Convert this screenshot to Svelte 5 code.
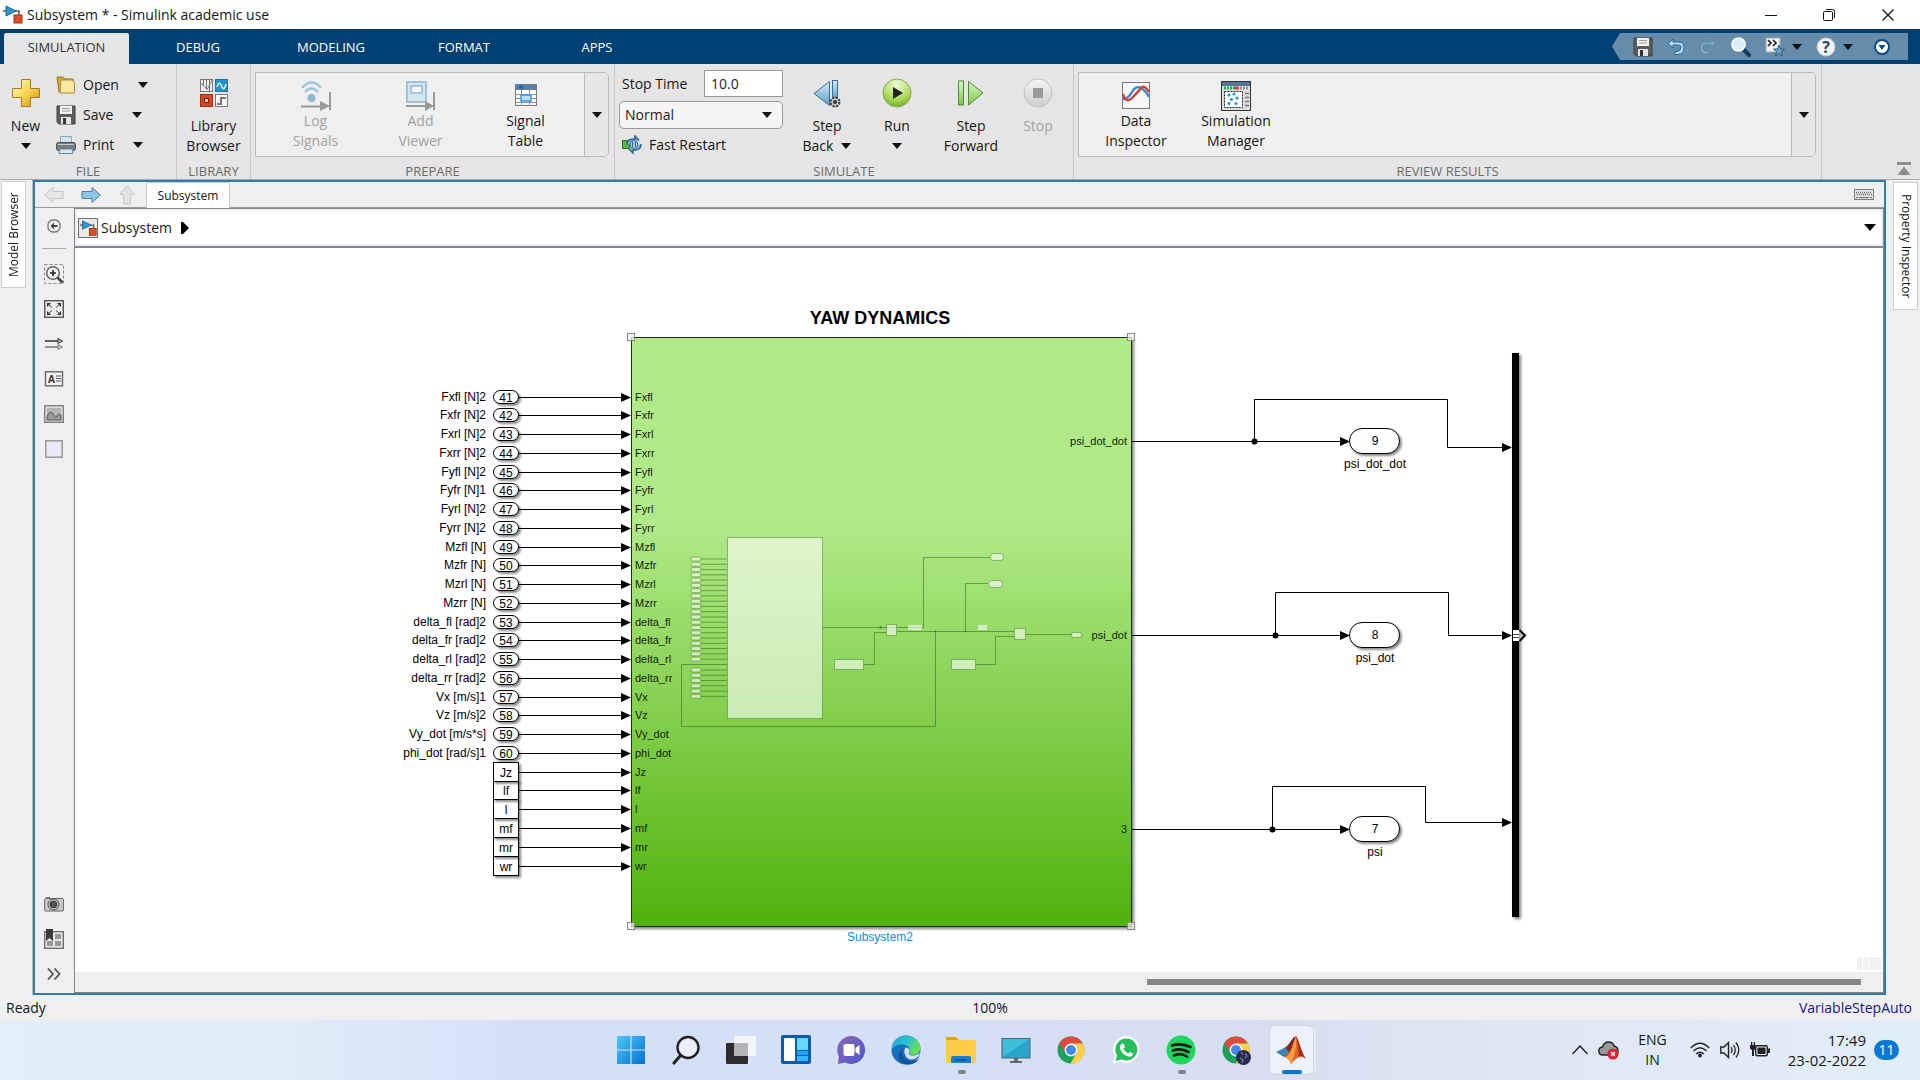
<script>
  const tabs = ['SIMULATION', 'DEBUG', 'MODELING', 'FORMAT', 'APPS'];

  const ports = [
    ['Fxfl [N]2', '41', 'Fxfl'], ['Fxfr [N]2', '42', 'Fxfr'], ['Fxrl [N]2', '43', 'Fxrl'],
    ['Fxrr [N]2', '44', 'Fxrr'], ['Fyfl [N]2', '45', 'Fyfl'], ['Fyfr [N]1', '46', 'Fyfr'],
    ['Fyrl [N]2', '47', 'Fyrl'], ['Fyrr [N]2', '48', 'Fyrr'], ['Mzfl [N]', '49', 'Mzfl'],
    ['Mzfr [N]', '50', 'Mzfr'], ['Mzrl [N]', '51', 'Mzrl'], ['Mzrr [N]', '52', 'Mzrr'],
    ['delta_fl [rad]2', '53', 'delta_fl'], ['delta_fr [rad]2', '54', 'delta_fr'],
    ['delta_rl [rad]2', '55', 'delta_rl'], ['delta_rr [rad]2', '56', 'delta_rr'],
    ['Vx [m/s]1', '57', 'Vx'], ['Vz [m/s]2', '58', 'Vz'], ['Vy_dot [m/s*s]', '59', 'Vy_dot'],
    ['phi_dot [rad/s]1', '60', 'phi_dot'],
    ['', 'Jz', 'Jz'], ['', 'lf', 'lf'], ['', 'l', 'l'], ['', 'mf', 'mf'], ['', 'mr', 'mr'], ['', 'wr', 'wr']
  ].map(([source, block, port], i) => ({ source, block, port, y: Math.floor(397 + i * 18.76) }));
  const constants = ports.filter((p) => !p.source);

  const outputs = [
    { n: '9', name: 'psi_dot_dot', port: 'psi_dot_dot', y: 441, bx: 1254, top: 399, dx: 1447, end: 447 },
    { n: '8', name: 'psi_dot', port: 'psi_dot', y: 635, bx: 1275, top: 592, dx: 1448, end: 635 },
    { n: '7', name: 'psi', port: '3', y: 829, bx: 1272, top: 786, dx: 1425, end: 822 }
  ];

  const miniPorts = [];
  for (let i = 0; i < 20; i++) miniPorts.push(559 + i * 5.27);
  for (let i = 0; i < 6; i++) miniPorts.push(670 + i * 5.27);

  const handles = [[631, 337], [1131, 337], [631, 926], [1131, 926]];

  const taskIcons = [
    ['start', 'Start'], ['search', 'Search'], ['taskview', 'Task View'], ['widgets', 'Widgets'],
    ['chat', 'Chat'], ['edge', 'Edge'], ['explorer', 'File Explorer'], ['desktop', 'Desktop'],
    ['chrome', 'Chrome'], ['whatsapp', 'WhatsApp'], ['spotify', 'Spotify'],
    ['chrome2', 'Chrome profile'], ['matlab', 'MATLAB']
  ];
  const running = ['explorer', 'spotify'];
</script>

{#snippet caret()}
  <svg class="caret" width="10" height="6" viewBox="0 0 10 6" aria-hidden="true"><path d="M0 0H10L5 6Z" fill="#111" /></svg>
{/snippet}

{#snippet floppy(size)}
  <svg width={size} height={size} viewBox="0 0 20 20" aria-hidden="true">
    <path d="M1 1H19V19H3L1 17Z" fill="#5c5c5c" stroke="#3e3e3e" />
    <rect x="4" y="1" width="12" height="8" fill="#f2f2f2" /><path d="M6 3.5H14M6 6H14" stroke="#999" />
    <rect x="5" y="12" width="10" height="7" fill="#e4e4e4" /><rect x="7" y="13" width="3" height="6" fill="#333" />
  </svg>
{/snippet}

{#snippet model()}
  <path d="M0 6H4M12 6H16V10" stroke="#555" stroke-width="1.5" fill="none" />
  <path d="M3 1L13 6L3 11Z" fill="#2f95cf" stroke="#176b9f" />
  <rect x="11" y="10" width="8" height="8" fill="#d9512b" stroke="#9c2f10" />
{/snippet}

{#snippet chromeShape()}
  <circle cx="15" cy="15" r="13.5" fill="#1da05b" />
  <path d="M3.3 8.2A13.5 13.5 0 0 1 26.7 8.2L15 9A6 6 0 0 0 9.5 18Z" fill="#dd4b3e" />
  <path d="M15 8.5H26.9A13.5 13.5 0 0 1 14.5 28.5L20.5 18Z" fill="#ffd04b" />
  <circle cx="15" cy="15" r="6.4" fill="#fff" /><circle cx="15" cy="15" r="5" fill="#4688f1" />
{/snippet}

{#snippet taskIcon(name)}
  <svg width="30" height="30" viewBox="0 0 30 30" aria-hidden="true">
    {#if name === 'start'}
      <defs><linearGradient id="win" x1="0" y1="0" x2="1" y2="1"><stop offset="0" stop-color="#4cc8fb" /><stop offset="1" stop-color="#0470cf" /></linearGradient></defs>
      <path d="M1 1H14.4V14.4H1ZM15.6 1H29V14.4H15.6ZM1 15.6H14.4V29H1ZM15.6 15.6H29V29H15.6Z" fill="url(#win)" />
    {:else if name === 'search'}
      <circle cx="17" cy="12.5" r="10.5" fill="#e8eefb" stroke="#222" stroke-width="2.4" /><path d="M9.5 20.5L3 28" stroke="#222" stroke-width="3" stroke-linecap="round" />
    {:else if name === 'taskview'}
      <rect x="0" y="8" width="22" height="21" rx="1" fill="#2c2c2c" /><rect x="8" y="1" width="22" height="20" rx="1" fill="#fafafa" opacity=".8" /><path d="M8 8H22V21H8Z" fill="#b4b4b4" />
    {:else if name === 'widgets'}
      <rect width="30" height="29" rx="2" fill="#0c5cab" /><rect x="3" y="3" width="11" height="23" rx="1" fill="#fff" /><rect x="16" y="3" width="11" height="12" rx="1" fill="#67d8ff" /><rect x="16" y="16" width="11" height="4" fill="#1ea2f3" /><rect x="16" y="21" width="11" height="5" fill="#39b4fb" />
    {:else if name === 'chat'}
      <defs><linearGradient id="chat" x1="0" y1="0" x2="1" y2="1"><stop offset="0" stop-color="#8d68b5" /><stop offset="1" stop-color="#4b56c9" /></linearGradient></defs>
      <path d="M15 1A14 14 0 1 1 9 27.6L2 29L2.8 21.5A14 14 0 0 1 15 1Z" fill="url(#chat)" /><rect x="7.5" y="9" width="11" height="12" rx="2" fill="#fff" /><path d="M19.5 13L23.5 10V20L19.5 17Z" fill="#fff" />
    {:else if name === 'edge'}
      <defs><linearGradient id="edgeTop" x1="0" y1="0" x2="1" y2=".5"><stop offset="0" stop-color="#229fd6" /><stop offset=".55" stop-color="#2bc3d2" /><stop offset="1" stop-color="#6be14c" /></linearGradient></defs>
      <circle cx="15" cy="15" r="14.5" fill="#176fc0" />
      <path d="M.6 15C1 5 7.5 .5 15 .5C24 .5 29.5 7 29.5 12.5C29.5 17 26 20 22 20C19 20 17.5 18.5 18 17C19.5 15 18.5 10 12 9.5C6 9 2 12 .6 15Z" fill="url(#edgeTop)" />
      <path d="M12.5 13C9 18 12 26.5 21 26.5C24 26.5 27 25 28.5 23.5C26 27.5 21 30 16 29.5C8 28 4 20 12.5 13Z" fill="#10529a" />
      <path d="M14.5 12.5C17 12.5 18.5 14 18 16.5C17 18.5 18.5 20.5 22 20.5C25 20.5 27 19.5 29 17.5C28.5 21 25 24.5 20.5 24.5C15 24.5 11.5 17 14.5 12.5Z" fill="#d7e0f6" />
    {:else if name === 'explorer'}
      <path d="M0 2H10L13 5V9H0Z" fill="#e5a10c" /><rect x="0" y="5" width="30" height="23" rx="1" fill="#ffcd43" /><path d="M5 28V23Q5 21 7 21H23Q25 21 25 23V28Z" fill="#1380d3" /><path d="M9 25H21" stroke="#0a4f92" stroke-width="1.5" />
    {:else if name === 'desktop'}
      <rect x="1" y="3.5" width="28" height="19.5" fill="#2aa6cd" stroke="#4f6572" /><path d="M2 4L28 4L2 22Z" fill="#46cade" opacity=".7" /><path d="M13 23H17V26H21V28H9V26H13Z" fill="#667" />
    {:else if name === 'chrome'}
      {@render chromeShape()}
    {:else if name === 'whatsapp'}
      <path d="M15 1A13.5 13.5 0 1 1 9 26.5L2 29L4 21.5A13.5 13.5 0 0 1 15 1Z" fill="#fff" /><circle cx="15.3" cy="14.5" r="11" fill="#25c05c" /><path d="M4.5 26L6 20L10.5 24.5Z" fill="#25c05c" />
      <path d="M11 8.5L13 9L14 12L12.5 13.5C13.5 16 15 17.5 17.5 18.5L19 17L22 18.5C22 21 19.5 22 17.5 21.5C13 20.5 9.5 16.5 9 12.5C9 10.5 10 9 11 8.5Z" fill="#fff" />
    {:else if name === 'spotify'}
      <circle cx="15" cy="15" r="14.5" fill="#1ed760" /><path d="M6 10.5Q15 7.5 24.5 12M7 15.5Q15 12.5 22.5 17M8 20.5Q15 17.5 21 21.5" stroke="#10180f" stroke-width="2.7" fill="none" stroke-linecap="round" />
    {:else if name === 'chrome2'}
      {@render chromeShape()}
      <circle cx="22.5" cy="22.5" r="7.5" fill="#262b4d" /><path d="M20 17L22 20M24 18L26 21L24 23M19 23L22 25L21 28" stroke="#7678a0" stroke-width="1.3" fill="none" />
    {:else}
      <path d="M0 17L9 12.5L14 16L8 22Z" fill="#3e83b8" /><path d="M9 12.5C13 11 16 2 20 1L13 21L8 22L13 17Z" fill="#7c2b22" /><path d="M20 1C23 5 25 17 30 24C25 20 22 21 15 29C14 25 11 22 8 22C15 19 18 7 20 1Z" fill="#e2622a" /><path d="M20 1C21 10 19 20 15 29C14 25 12 23 10 22C16 18 18 8 20 1Z" fill="#f5a038" /><path d="M20 1C22 9 23 15 22.5 22C25 20 27 21 30 24C25 17 23 5 20 1Z" fill="#a92d1c" />
    {/if}
  </svg>
{/snippet}

{#snippet minimap()}
  <g class="mini">
    <rect x="727.5" y="537.5" width="95" height="181" />
    {#each miniPorts as y}
      <path d="M701 {y}H727" /><rect x="691" y={y - 2} width="10" height="4" rx="2" />
    {/each}
    <path d="M727 664.5H681.5V726.5H935.5V631.5" />
    <path d="M823 627.5H923.5V557.5H990M897 631.5H1014M965.5 631.5V583.5H988M1026 634.5H1071M864 664.5H874.5V632.5H886M976 664.5H995.5V636.5H1014" />
    <rect x="886.5" y="624.5" width="10" height="11" /><rect x="1014.5" y="628.5" width="11" height="11" />
    <rect x="834.5" y="659.5" width="29" height="10" /><rect x="951.5" y="659.5" width="24" height="10" />
    <rect x="990.5" y="553.5" width="13" height="7" rx="3" /><rect x="988.5" y="580.5" width="14" height="7" rx="3" />
    <rect x="1071.5" y="632.5" width="10" height="5" rx="2" />
    <rect class="plain" x="908" y="625" width="14" height="5" /><rect class="plain" x="978" y="625" width="9" height="5" />
    <path d="M880 626.5L882 627.5L880 628.5ZM935 631H936V632H935ZM965 631H966V632H965Z" />
  </g>
{/snippet}

<div class="app">
  <header class="titlebar">
    <svg width="20" height="20" viewBox="0 0 20 20" aria-hidden="true">{@render model()}</svg>
    <h1>Subsystem * - Simulink academic use</h1>
    <div class="window-buttons">
      <button aria-label="Minimize"><svg width="12" height="12" viewBox="0 0 12 12"><path d="M0 6.5H12" stroke="#111" /></svg></button>
      <button aria-label="Restore"><svg width="12" height="12" viewBox="0 0 12 12"><path d="M.5 3.5Q.5 2.5 1.5 2.5H8.5Q9.5 2.5 9.5 3.5V10.5Q9.5 11.5 8.5 11.5H1.5Q.5 11.5 .5 10.5ZM3 .5H9.5Q11.5 .5 11.5 2.5V9" stroke="#111" fill="none" /></svg></button>
      <button aria-label="Close"><svg width="12" height="12" viewBox="0 0 12 12"><path d="M.5 .5L11.5 11.5M11.5 .5L.5 11.5" stroke="#111" stroke-width="1.2" /></svg></button>
    </div>
  </header>

  <nav class="tabs" aria-label="Toolstrip">
    {#each tabs as tab, i}
      <button class="tab" class:active={i === 0}>{tab}</button>
    {/each}
    <div class="quick">
      <button aria-label="Save">{@render floppy(20)}</button>
      <button aria-label="Undo"><svg width="18" height="18" viewBox="0 0 18 18"><path d="M6 1L1 5.5L6 10V7H12Q14 7 14 9.5Q14 13 10 13.5H8V16.5H11Q17 16 17 9.5Q17 4 12 4H6Z" fill="#b4dcf5" stroke="#2c638d" /></svg></button>
      <button aria-label="Redo"><svg width="18" height="18" viewBox="0 0 18 18"><path d="M12 1L17 5.5L12 10V7H6Q4 7 4 9.5Q4 13 8 13.5H10V16.5H7Q1 16 1 9.5Q1 4 6 4H12Z" fill="#7fa5c1" stroke="#5983a5" /></svg></button>
      <button aria-label="Search"><svg width="20" height="20" viewBox="0 0 20 20"><path d="M11 11L18 18" stroke="#173a5c" stroke-width="4" stroke-linecap="round" /><circle cx="7.5" cy="7.5" r="6.5" fill="#d8effb" stroke="#fff" stroke-width="1.6" /></svg></button>
      <button class="wide" aria-label="Favorites"><svg width="20" height="20" viewBox="0 0 20 20"><rect x="1" y="1" width="14" height="14" fill="#f1f1f1" stroke="#9aa" /><path d="M3 3L6 6L3 9M8 3L11 6L8 9" stroke="#222" stroke-width="1.7" fill="none" /><path d="M14 8L15.5 12H19.5L16.5 14.5L17.5 19L14 16.5L10.5 19L11.5 14.5L8.5 12H12.5Z" fill="#6d9fc8" stroke="#315d87" /></svg>{@render caret()}</button>
      <button class="wide" aria-label="Help"><svg width="20" height="20" viewBox="0 0 20 20"><circle cx="10" cy="10" r="9" fill="#f1f5f8" stroke="#c2ccd5" /><text x="10" y="16" text-anchor="middle" font-size="16" font-weight="700" fill="#345">?</text></svg>{@render caret()}</button>
      <button aria-label="Toolstrip options"><svg width="16" height="16" viewBox="0 0 16 16"><circle cx="8" cy="8" r="7" fill="#fff" stroke="#0b4d80" stroke-width="2" /><path d="M4.5 6H11.5L8 11Z" fill="#0b4d80" /></svg></button>
    </div>
  </nav>

  <div class="ribbon">
    <section class="group file">
      <div class="body">
        <button class="big new">
          <svg width="30" height="30" viewBox="0 0 30 30" aria-hidden="true"><defs><linearGradient id="gold" x1="0" y1="0" x2="1" y2="1"><stop offset="0" stop-color="#fffbe0" /><stop offset=".5" stop-color="#f8d64b" /><stop offset="1" stop-color="#c98f1a" /></linearGradient></defs><path d="M10.5 1.5H19.5V10.5H28.5V19.5H19.5V28.5H10.5V19.5H1.5V10.5H10.5Z" fill="url(#gold)" stroke="#a67c23" /></svg>
          <span>New</span><span>{@render caret()}</span>
        </button>
        <div class="rows">
          <button class="row"><svg width="20" height="20" viewBox="0 0 20 20" aria-hidden="true"><path d="M1 2H7L9 4H17V17H3Z" fill="#d9a835" stroke="#9b7420" /><path d="M5 5H16L18.5 7V18H4Z" fill="#fae9a2" stroke="#b08a34" /></svg>Open{@render caret()}</button>
          <button class="row">{@render floppy(20)}Save{@render caret()}</button>
          <button class="row"><svg width="20" height="20" viewBox="0 0 20 20" aria-hidden="true"><path d="M4.5 8V1.5H15.5V8" fill="#cfe4f5" stroke="#8aa" /><rect x=".5" y="7.5" width="19" height="8" rx="2" fill="#777c80" stroke="#4d5052" /><path d="M2 9.5H18" stroke="#c9cdd0" /><path d="M4 14H16L17 18.5H3Z" fill="#d4e8f7" stroke="#6f8391" /></svg>Print{@render caret()}</button>
        </div>
      </div>
      <h2>FILE</h2>
    </section>

    <section class="group library">
      <div class="body center">
        <button class="big">
          <svg width="30" height="30" viewBox="0 0 30 30" aria-hidden="true"><rect x="1.5" y="1.5" width="12" height="12" fill="#eee" stroke="#777" /><path d="M4.5 2V8M7.500 2V11L2 5M10.500 2V13M13 2L8 12" stroke="#777" fill="none" /><rect x="16.5" y="1.5" width="12" height="12" fill="#2391cb" stroke="#1474a8" /><path d="M18 9Q20 2 22.5 8T27 6" stroke="#d3f0ff" stroke-width="1.5" fill="none" /><rect x="1.5" y="16.5" width="12" height="12" fill="#d34a22" stroke="#9b2f10" /><rect x="5.5" y="20.5" width="4" height="4" fill="#f4c2b1" stroke="#75200a" /><rect x="16.5" y="16.5" width="12" height="12" fill="#f5f5f5" stroke="#777" /><path d="M18 26H22V20H27" stroke="#777" stroke-width="2" fill="none" /></svg>
          <span>Library</span><span>Browser</span>
        </button>
      </div>
      <h2>LIBRARY</h2>
    </section>

    <section class="group prepare">
      <div class="body">
        <div class="gallery">
          <button class="item" disabled>
            <svg width="30" height="28" viewBox="0 0 30 28" aria-hidden="true"><path d="M0 24.5H20" stroke="#9a9a9a" stroke-width="2" /><path d="M19 19L29 24L19 29ZM28 10H30V28H28Z" fill="#999" /><g stroke="#9cc4de" fill="none" stroke-width="2.4"><path d="M1 6Q10.5 -5 20 6M4 10Q10.5 3 17 10" /></g><circle cx="10.5" cy="16" r="4" fill="#8fb8d4" /></svg>
            <span>Log</span><span>Signals</span>
          </button>
          <button class="item" disabled>
            <svg width="30" height="28" viewBox="0 0 30 28" aria-hidden="true"><rect x="1" y="0" width="19" height="20" fill="#d5e5f0" stroke="#a5c3d8" stroke-width="2" /><rect x="5" y="4" width="11" height="7" fill="#f4f8fb" stroke="#93b7d1" stroke-width="1.5" /><path d="M0 24H20" stroke="#9a9a9a" stroke-width="2" /><path d="M19 19L28 24L19 29ZM27 10H29V28H27Z" fill="#999" /></svg>
            <span>Add</span><span>Viewer</span>
          </button>
          <button class="item">
            <svg width="30" height="28" viewBox="0 0 30 28" aria-hidden="true"><rect x="4.5" y="2.5" width="21" height="21" fill="#fff" stroke="#777" /><rect x="4" y="2" width="22" height="6" fill="#5f7f9f" /><rect x="8" y="3.5" width="4" height="3" fill="#1c5fc0" /><path d="M5 12.5H25M5 16.5H25M5 20.5H25M10.5 8V24M18.5 8V24" stroke="#8a929a" /><rect x="10" y="13" width="10" height="6" fill="#b9defa" stroke="#3c95e0" stroke-width="1.5" /></svg>
            <span>Signal</span><span>Table</span>
          </button>
          <button class="more" aria-label="More prepare tools">{@render caret()}</button>
        </div>
      </div>
      <h2>PREPARE</h2>
    </section>

    <section class="group simulate">
      <div class="body">
        <div class="fields">
          <div class="stop-time"><label for="stop-time">Stop Time</label><input id="stop-time" value="10.0" /></div>
          <div class="mode">
            <select aria-label="Simulation mode"><option>Normal</option></select>
            {@render caret()}
          </div>
          <button class="row fast"><svg width="20" height="20" viewBox="0 0 20 20" aria-hidden="true"><rect x=".5" y="5.5" width="7" height="8" fill="#59b347" stroke="#34762a" /><path d="M5 9.5Q5 4 11 4H13V1L17 5.5M19 9Q19 15 13 15H11V18L6.5 13.5" fill="#88b9d9" stroke="#2d658c" stroke-width="1.5" /><circle cx="12" cy="9.5" r="4" fill="#a5cbe3" stroke="#3b7098" /><path d="M10.5 7V12M13.5 7V12" stroke="#2d658c" /></svg>Fast Restart</button>
        </div>
        <button class="big">
          <svg width="30" height="30" viewBox="0 0 30 30" aria-hidden="true"><defs><linearGradient id="sky" x1="0" y1="0" x2="0" y2="1"><stop offset="0" stop-color="#d5ebf8" /><stop offset="1" stop-color="#5b9dc8" /></linearGradient></defs><path d="M17.5 3.5V27.5L2 15.5Z" fill="url(#sky)" stroke="#3a6e94" /><rect x="20.5" y="2.5" width="5" height="20" fill="url(#sky)" stroke="#3a6e94" /><circle cx="23" cy="24" r="4.5" fill="#ccc" stroke="#444" stroke-width="2" stroke-dasharray="2.5 1" /><circle cx="23" cy="24" r="2" fill="#333" /></svg>
          <span>Step</span><span>Back{@render caret()}</span>
        </button>
        <button class="big">
          <svg width="30" height="30" viewBox="0 0 30 30" aria-hidden="true"><defs><radialGradient id="run" cx=".5" cy=".2" r=".9"><stop offset="0" stop-color="#f0fad7" /><stop offset=".6" stop-color="#acd957" /><stop offset="1" stop-color="#579f1f" /></radialGradient></defs><circle cx="15" cy="15" r="14" fill="url(#run)" stroke="#8aa964" /><path d="M11 9L21 15L11 21Z" fill="#222" /></svg>
          <span>Run</span><span>{@render caret()}</span>
        </button>
        <button class="big fwd">
          <svg width="30" height="30" viewBox="0 0 30 30" aria-hidden="true"><defs><linearGradient id="leaf" x1="0" y1="0" x2="0" y2="1"><stop offset="0" stop-color="#dcf5c3" /><stop offset="1" stop-color="#7cc64d" /></linearGradient></defs><rect x="2.5" y="3" width="5" height="24" fill="url(#leaf)" stroke="#4c8a2c" /><path d="M12.5 3.5V27L27 15Z" fill="url(#leaf)" stroke="#4c8a2c" /></svg>
          <span>Step</span><span>Forward</span>
        </button>
        <button class="big stop" disabled>
          <svg width="30" height="30" viewBox="0 0 30 30" aria-hidden="true"><defs><linearGradient id="pale" x1="0" y1="0" x2="0" y2="1"><stop offset="0" stop-color="#f4f4f4" /><stop offset="1" stop-color="#cfcfcf" /></linearGradient></defs><circle cx="15" cy="15" r="14" fill="url(#pale)" stroke="#c2c2c2" /><rect x="10" y="10" width="10" height="10" fill="#9a9a9a" /></svg>
          <span>Stop</span>
        </button>
      </div>
      <h2>SIMULATE</h2>
    </section>

    <section class="group review">
      <div class="body">
        <div class="gallery">
          <button class="item">
            <svg width="30" height="28" viewBox="0 0 30 28" aria-hidden="true"><rect x="1.5" y=".5" width="27" height="26" fill="#f6f6f6" stroke="#777" /><path d="M2 17Q7 17 11 10T20 6T28 15" stroke="#3b87c4" stroke-width="2.4" fill="none" /><path d="M2 12Q5 22 11 16T20 6T28 10" stroke="#c8413a" stroke-width="2.4" fill="none" /></svg>
            <span>Data</span><span>Inspector</span>
          </button>
          <button class="item">
            <svg width="30" height="30" viewBox="0 0 30 30" aria-hidden="true"><rect x=".5" y=".5" width="29" height="29" fill="#ddd" stroke="#333" /><rect x="1" y="1" width="28" height="4" fill="#54749a" /><path d="M3 7H14" stroke="#18b34b" stroke-width="3" stroke-dasharray="2 1" /><path d="M14 7H18" stroke="#e3392c" stroke-width="3" /><path d="M19 7H28" stroke="#999" stroke-width="3" stroke-dasharray="2 1" /><rect x="3.5" y="10.5" width="18" height="16" fill="#fff" stroke="#222" stroke-dasharray="2 1" /><g fill="#2591da"><circle cx="8" cy="14" r="1.6" /><circle cx="13" cy="13" r="1.6" /><circle cx="10.5" cy="18.5" r="1.6" /><circle cx="16" cy="17" r="1.6" /><circle cx="8" cy="22.5" r="1.6" /><circle cx="15" cy="22.5" r="1.6" /></g><path d="M24 12.5H28M24 16.5H28M24 20.5H28M24 24.5H28" stroke="#777" stroke-width="1.5" /></svg>
            <span>Simulation</span><span>Manager</span>
          </button>
          <button class="more" aria-label="More review tools">{@render caret()}</button>
        </div>
      </div>
      <h2>REVIEW RESULTS</h2>
    </section>
    <div class="collapse"><button aria-label="Minimize toolstrip"><svg width="14" height="14" viewBox="0 0 14 14"><path d="M0 0H14V3H0ZM7 4.5L13.5 13H.5Z" fill="#8f8f8f" /></svg></button></div>
  </div>

  <main>
    <aside class="rail"><button class="side left">Model Browser</button></aside>

    <div class="editor">
      <div class="navbar">
        <button aria-label="Back"><svg width="20" height="18" viewBox="0 0 20 18"><path d="M.7 9L9 1.5V5.5H19V12.5H9V16.5Z" fill="#e6e6e6" stroke="#c4c4c4" /></svg></button>
        <button aria-label="Forward"><svg width="20" height="18" viewBox="0 0 20 18"><path d="M19.3 9L11 1.5V5.5H1V12.5H11V16.5Z" fill="#8fc3e6" stroke="#4681a8" /></svg></button>
        <button aria-label="Up"><svg width="18" height="20" viewBox="0 0 18 20"><path d="M9 .7L1.5 9.5H5.5V19H12.5V9.5H16.5Z" fill="#e2e2e2" stroke="#c8c8c8" /></svg></button>
        <button class="doc">Subsystem</button>
        <button class="keys" aria-label="Keyboard"><svg width="20" height="11" viewBox="0 0 20 11"><rect x=".5" y=".5" width="19" height="10" fill="#e3e3e3" stroke="#7c7c7c" /><path d="M2 3.5H18M3 5.500H18" stroke="#6c6c6c" stroke-width="1.5" stroke-dasharray="1 1" /><path d="M2 8.5H4M5 8.5H15M16 8.5H18" stroke="#6c6c6c" /></svg></button>
      </div>

      <div class="work">
        <div class="palette">
          <button aria-label="Hide browser"><svg width="14" height="14" viewBox="0 0 14 14"><rect x="1" y="1" width="12" height="12" rx="5" fill="#eee" stroke="#777" stroke-width="1.3" /><path d="M7 3.5L3.5 7L7 10.5V8H10.5V6H7Z" fill="#444" /></svg></button>
          <hr />
          <button aria-label="Zoom"><svg width="20" height="20" viewBox="0 0 20 20"><rect x=".5" y=".5" width="19" height="19" fill="none" stroke="#888" stroke-dasharray="3 2" /><circle cx="9" cy="9" r="6.3" fill="#f4f4f4" stroke="#666" stroke-width="1.5" /><path d="M9 6V12M6 9H12" stroke="#222" stroke-width="1.6" /><path d="M13.5 13.5L18.5 18.5" stroke="#444" stroke-width="2.6" /></svg></button>
          <button aria-label="Fit to view"><svg width="20" height="18" viewBox="0 0 20 18"><rect x=".7" y=".7" width="18.6" height="16.6" fill="#eaeaea" stroke="#555" stroke-width="1.4" /><path d="M3 3H7L3 7ZM17 3H13L17 7ZM3 15H7L3 11ZM17 15H13L17 11Z" fill="#333" /><path d="M4 4L8 7.5M16 4L12 7.5M4 14L8 10.5M16 14L12 10.5" stroke="#444" /></svg></button>
          <button aria-label="Sample times"><svg width="20" height="14" viewBox="0 0 20 14"><path d="M1 4H15" stroke="#333" stroke-width="1.5" /><path d="M1 10H15" stroke="#777" stroke-width="1.5" /><path d="M14 1.5L18.5 4L14 6.5Z" fill="#ccc" stroke="#333" /><path d="M14 7.5L18.5 10L14 12.5Z" fill="#ddd" stroke="#777" /></svg></button>
          <button aria-label="Annotation"><svg width="20" height="16" viewBox="0 0 20 16"><rect x="1.5" y=".8" width="17" height="14" fill="#f2f2f2" stroke="#666" stroke-width="1.4" /><text x="7.5" y="11.5" text-anchor="middle" font-size="10" font-weight="700" fill="#333">A</text><path d="M12 5H17M12 7.5H17M12 10H17" stroke="#555" /></svg></button>
          <button aria-label="Image"><svg width="20" height="18" viewBox="0 0 20 18"><rect x=".7" y=".7" width="18.6" height="16.6" fill="#ddd" stroke="#808080" stroke-width="1.4" /><rect x="3" y="3" width="14" height="12" fill="#b4b4b4" /><path d="M3 12Q6 4 9 9T13 11T17 10V15H3Z" fill="#999" stroke="#555" /></svg></button>
          <button aria-label="Area"><svg width="18" height="18" viewBox="0 0 18 18"><rect x=".8" y=".8" width="16.4" height="16.4" fill="#e9e9f8" stroke="#999" stroke-width="1.5" /></svg></button>
          <div class="spacer"></div>
          <button aria-label="Screenshot"><svg width="20" height="16" viewBox="0 0 20 16"><path d="M2 1H6V3H2Z" fill="#777" /><rect x=".6" y="2.5" width="18.8" height="12.5" rx="1" fill="#c9c9c9" stroke="#666" /><circle cx="9.5" cy="8.5" r="5.5" fill="#bbb" stroke="#555" /><circle cx="9.5" cy="8.5" r="3.3" fill="#555" stroke="#333" /></svg></button>
          <button aria-label="Bookmarks"><svg width="20" height="20" viewBox="0 0 20 20"><rect x=".7" y="2.7" width="18.6" height="16.6" fill="#e8e8e8" stroke="#707070" stroke-width="1.4" /><path d="M11 5H17V10H11ZM11 12H17V17H11ZM3 12H9V17H3Z" fill="#999" /><path d="M2 0H9V12L5.5 9L2 12Z" fill="#3c3c3c" /></svg></button>
          <button aria-label="More"><svg width="14" height="12" viewBox="0 0 14 12"><path d="M1 .5L6 6L1 11.5M7.5 .5L12.5 6L7.5 11.5" stroke="#555" stroke-width="1.8" fill="none" /></svg></button>
        </div>

        <div class="view">
          <div class="crumbs">
            <svg width="20" height="20" viewBox="0 0 20 20" aria-hidden="true"><rect x=".5" y=".5" width="19" height="19" fill="#e9e9e9" stroke="#707070" /><g transform="translate(2 2) scale(.85)">{@render model()}</g></svg>
            <button>Subsystem</button>
            <svg class="arrow" width="8" height="12" viewBox="0 0 8 12" aria-hidden="true"><path d="M0 0H2L8 6L2 12H0Z" fill="#000" /></svg>
            <button class="drop" aria-label="Path history"><svg width="12" height="7" viewBox="0 0 12 7"><path d="M0 0H12L6 7Z" fill="#000" /></svg></button>
          </div>

          <div class="canvas">
            <svg class="diagram" aria-label="Yaw dynamics block diagram">
              <defs>
                <linearGradient id="green" x1="0" y1="0" x2="0" y2="1"><stop offset="0" stop-color="#b2ea8a" /><stop offset=".32" stop-color="#b0e987" /><stop offset="1" stop-color="#50b20c" /></linearGradient>
                <filter id="shade" x="-20%" y="-20%" width="150%" height="160%"><feDropShadow dx="2" dy="2" stdDeviation="1.5" flood-opacity=".5" /></filter>
                <filter id="shadeBar" filterUnits="userSpaceOnUse" x="1500" y="340" width="40" height="600"><feDropShadow dx="2" dy="2" stdDeviation="1.5" flood-opacity=".5" /></filter>
              </defs>
              <g transform="translate(-75 -248)">
                <text class="heading" x="880" y="324" text-anchor="middle">YAW DYNAMICS</text>
                <rect x="631.5" y="337.5" width="500" height="589" fill="url(#green)" stroke="#1c2a12" filter="url(#shade)" />
                {@render minimap()}
                {#each handles as [x, y]}
                  <rect x={x - 3.5} y={y - 3.5} width="7" height="7" fill="#f4f4f4" fill-opacity=".7" stroke="#888" />
                {/each}
                <text class="link" x="880" y="941" text-anchor="middle">Subsystem2</text>

                {#each [...constants].reverse() as p}
                  <rect x="493.5" y={p.y - 9.5} width="25" height="19" class="block" />
                {/each}
                {#each ports as p}
                  {#if p.source}
                    <text x="486" y={p.y + 4} text-anchor="end">{p.source}</text>
                    <rect x="493.5" y={p.y - 6.5} width="25" height="13" rx="6.5" class="block" />
                  {/if}
                  <text x="506" y={p.y + 5} text-anchor="middle">{p.block}</text>
                  <path class="wire" d="M519 {p.y + 0.5}H622" />
                  <path d="M621 {p.y - 4}L631 {p.y + 0.5}L621 {p.y + 5}Z" />
                  <text class="port" x="635" y={p.y + 4}>{p.port}</text>
                {/each}

                <rect x="1512" y="353" width="7" height="564" filter="url(#shadeBar)" />
                {#each outputs as o}
                  <text class="port" x="1127" y={o.y + 4} text-anchor="end">{o.port}</text>
                  <path class="wire" d="M1132 {o.y + 0.5}H1342M{o.bx + 0.5} {o.y}V{o.top + 0.5}H{o.dx + 0.5}V{o.end + 0.5}H1504" />
                  <circle cx={o.bx + 0.5} cy={o.y + 0.5} r="3" />
                  <path d="M1340 {o.y - 4}L1350 {o.y + 0.5}L1340 {o.y + 5}ZM1502 {o.end - 4}L1512 {o.end + 0.5}L1502 {o.end + 5}Z" />
                  <rect x="1349.5" y={o.y - 12.5} width="50" height="25" rx="12.5" class="block" />
                  <text x="1375" y={o.y + 4} text-anchor="middle">{o.n}</text>
                  <text x="1375" y={o.y + 27} text-anchor="middle">{o.name}</text>
                {/each}
                <path d="M1519.5 630L1525 635.5L1519.5 641" fill="#bbb" stroke="#000" stroke-width="2" />
                <rect x="1513" y="630" width="6" height="11" fill="#fff" />
                <path d="M1513 634.5H1519M1513 637.5H1519" stroke="#444" />
              </g>
            </svg>
            <div class="grip"><i></i><i></i><i class="last"></i></div>
          </div>
          <div class="scroll"><span></span></div>
        </div>
      </div>
    </div>

    <aside class="rail right"><button class="side">Property Inspector</button></aside>
  </main>

  <footer class="status"><span>Ready</span><span class="mid">100%</span><span class="solver">VariableStepAuto</span></footer>

  <div class="taskbar">
    <div class="apps">
      {#each taskIcons as [name, label]}
        <button class="task" class:current={name === 'matlab'} class:running={running.includes(name)} aria-label={label}>{@render taskIcon(name)}</button>
      {/each}
    </div>
    <div class="tray">
      <button aria-label="Hidden icons"><svg width="16" height="10" viewBox="0 0 16 10"><path d="M.5 9L8 1L15.5 9" stroke="#222" stroke-width="1.5" fill="none" /></svg></button>
      <button aria-label="OneDrive"><svg width="21" height="19" viewBox="0 0 21 19"><path d="M5 14Q.8 14 .8 10Q.8 6.5 4.5 6Q6 1 10.5 1Q15 1 16 5Q20 6 20 10T16 14Z" fill="#999" stroke="#222" stroke-width="1.4" /><circle cx="15" cy="13" r="5.6" fill="#d92232" /><path d="M13 11L17 15M17 11L13 15" stroke="#fff" stroke-width="1.4" /></svg></button>
      <button class="lang"><span>ENG</span><span>IN</span></button>
      <button aria-label="Wi-Fi"><svg width="20" height="16" viewBox="0 0 20 16"><path d="M.8 6Q10 -3.5 19.2 6M3.5 9Q10 2.5 16.5 9M6.2 12Q10 8.3 13.8 12" stroke="#222" stroke-width="1.4" fill="none" /><circle cx="10" cy="13.5" r="1.9" fill="#222" /></svg></button>
      <button aria-label="Volume"><svg width="20" height="18" viewBox="0 0 20 18"><path d="M.8 6H4L8.5 1.5V16.5L4 12H.8Z" fill="none" stroke="#222" stroke-width="1.4" /><path d="M11 6Q13 9 11 12M13.5 4Q17 9 13.5 14M16 1.5Q21.5 9 16 16.5" stroke="#222" stroke-width="1.3" fill="none" /></svg></button>
      <button aria-label="Battery"><svg width="20" height="16" viewBox="0 0 20 16"><path d="M0 3H6V6Q6 7.5 4 8V14H2V8Q0 7.5 0 6ZM1 0H2.3V3H1ZM3.7 0H5V3H3.7Z" fill="#222" /><rect x="5.7" y="3.7" width="11.6" height="10" rx="1.5" fill="none" stroke="#222" stroke-width="1.4" /><rect x="7.5" y="5.5" width="8" height="6.5" fill="#222" /><path d="M18 6.5H20V11H18Z" fill="#222" /></svg></button>
      <button class="clock"><span>17:49</span><span>23-02-2022</span></button>
      <button class="badge">11</button>
    </div>
  </div>
</div>

<style>
  :global(body) { margin: 0; }
  .app {
    display: flex; flex-direction: column; min-height: 100vh; background: #efefef;
    font-family: "Open Sans", "Noto Sans", sans-serif; font-size: 14px; line-height: 20px; color: #161616;
  }
  button { font: inherit; color: inherit; background: none; border: 0; padding: 0; margin: 0; white-space: nowrap; }
  button:disabled { color: #a2a2a2; }
  svg { display: block; flex: none; }
  h1, h2 { margin: 0; font-weight: 400; }

  .titlebar { display: flex; align-items: center; height: 29px; background: #fff; padding-left: 3px; }
  .titlebar h1 { flex: 1; font-size: 14px; padding-left: 4px; }
  .window-buttons { display: flex; padding-right: 2px; }
  .window-buttons button { width: 58px; display: grid; place-items: center; }
  .window-buttons button:last-child { width: 60px; }

  .tabs { display: flex; gap: 3px; height: 35px; background: #004073; padding-left: 4px; align-items: flex-end; }
  .tab { width: 130px; height: 31px; color: #fff; font-size: 13px; padding-bottom: 3px; }
  .tab.active { width: 125px; margin-right: 1px; background: #e6e6e6; color: #333; border-radius: 2px 2px 0 0; }
  .quick {
    display: flex; align-items: center; gap: 14px; height: 27px; margin: 0 12px 4px auto; padding: 0 18px 0 21px;
    background: #668cab; clip-path: polygon(8px 0, 100% 0, 100% 100%, 8px 100%, 0 50%);
  }
  .quick .wide { display: flex; align-items: center; gap: 7px; }
  .quick button:last-child { margin-left: 7px; }

  .ribbon { display: flex; height: 115px; background: #e5e5e5; border-bottom: 1px solid #a9a9a9; }
  .group { display: flex; flex-direction: column; border-right: 1px solid #c6c6c6; padding-top: 6px; }
  .group h2 { text-align: center; font-size: 13px; line-height: 16px; color: #6b6b6b; }
  .body { display: flex; height: 93px; }
  .center { justify-content: center; }
  .file { width: 176px; }
  .library { width: 73px; }
  .prepare { width: 363px; }
  .simulate { width: 458px; }
  .review { flex: 1; }
  .big { width: 70px; display: flex; flex-direction: column; align-items: center; padding-top: 8px; }
  .big svg:first-child { margin-bottom: 8px; }
  .big span { display: flex; align-items: center; justify-content: center; gap: 8px; height: 20px; }
  .big span :global(.caret) { margin: 0; }
  .big.new { width: 51px; }
  .big.fwd { width: 78px; }
  .big.stop { width: 56px; }
  .rows { display: flex; flex-direction: column; padding-left: 5px; }
  .row { display: flex; align-items: center; height: 30px; gap: 7px; }
  .row :global(.caret) { margin-left: 12px; }
  .gallery {
    flex: 1; display: flex; margin: 2px 5px 0 4px; height: 83px; background: #efefef;
    border: 1px solid #bababa; border-radius: 0 5px 5px 0; padding-left: 7px;
  }
  .item { width: 105px; display: flex; flex-direction: column; align-items: center; }
  .item svg { height: 30px; margin-top: 8px; }
  .item span { height: 20px; }
  .review .item { width: 100px; }
  .more { margin-left: auto; width: 24px; display: grid; place-items: center; background: #e6e6e6; border-left: 1px solid #bababa; border-radius: 0 4px 4px 0; }
  .fields { width: 164px; margin: 0 9px 0 4px; }
  .stop-time { display: flex; align-items: center; justify-content: space-between; padding-left: 3px; }
  input { box-sizing: border-box; width: 79px; height: 27px; border: 1px solid #999; background: #fff; font: inherit; color: #222; padding: 0 6px; }
  .mode { display: grid; align-items: center; margin: 4px 0 1px; }
  .mode > :global(*) { grid-area: 1 / 1; }
  .mode :global(.caret) { justify-self: end; margin-right: 11px; pointer-events: none; }
  select { appearance: none; width: 100%; height: 28px; border: 1px solid #999; border-radius: 5px; background: #f5f5f5; font: inherit; color: #222; padding: 0 5px; }
  .fast { margin-left: 3px; }
  .collapse { width: 98px; display: flex; justify-content: flex-end; align-items: flex-end; box-sizing: border-box; padding: 0 9px 3px 0; }

  main { flex: 1; display: flex; }
  .rail { width: 33px; box-sizing: border-box; border-right: 1px solid #b9b9b9; }
  .rail.right { width: 34px; border: 0; padding-left: 7px; }
  .side {
    writing-mode: vertical-rl; width: 25px; height: 128px; margin-top: 2px; background: #fff; border: 1px solid #cdcdcd;
    font-size: 12px; display: flex; align-items: center; justify-content: center; line-height: 16px;
  }
  .side.left { transform: rotate(180deg); height: 107px; margin: 1px 0 0 1px; }
  .editor { flex: 1; display: flex; flex-direction: column; border: 2px solid #337ab0; min-width: 0; }
  .navbar { display: flex; align-items: center; height: 25px; border-bottom: 1px solid #9a9a9a; padding: 0 10px 0 9px; gap: 17px; }
  .navbar .doc { align-self: stretch; width: 84px; margin: 0 0 -1px -7px; background: #fff; border: 1px solid #d0d0d0; border-bottom: 0; font-size: 12px; line-height: 16px; }
  .keys { margin-left: auto; }
  .work { flex: 1; display: flex; }
  .palette { width: 38px; display: flex; flex-direction: column; align-items: center; padding: 0 1px 2px 0; }
  .palette button { width: 38px; height: 35px; display: grid; place-items: center; }
  .palette hr { width: 24px; margin: 5px 0 7px; border: 0; border-top: 1px solid #aaa; }
  .spacer { flex: 1; }
  .view { flex: 1; display: flex; flex-direction: column; border: 1px solid #848490; min-width: 0; }
  .crumbs { display: flex; align-items: center; height: 33px; background: #fff; border: 2px solid #efefef; padding: 0 5px 0 1px; }
  .crumbs button { margin-left: 3px; }
  .crumbs .arrow { margin-left: 9px; }
  .crumbs .drop { margin-left: auto; }
  .canvas { flex: 1; position: relative; min-height: 700px; background: #fff; border-top: 2px solid #848490; overflow: hidden; }
  .diagram { position: absolute; left: 0; top: 0; width: 100%; height: 100%; font-family: "Liberation Sans", Arial, sans-serif; font-size: 12px; }
  .diagram .port { font-size: 11px; fill: #14240a; }
  .diagram .heading { font-size: 18px; font-weight: 700; }
  .diagram .link { fill: #0a8fea; }
  .block { fill: #fff; stroke: #000; filter: drop-shadow(2px 2px 1px rgba(0, 0, 0, 0.45)); }
  .wire { fill: none; stroke: #000; }
  .mini rect { fill: #fff; fill-opacity: 0.58; stroke: #3f7420; stroke-opacity: 0.45; }
  .mini path { fill: none; stroke: #2d5c12; stroke-opacity: 0.5; }
  .mini .plain { stroke: none; }
  .grip { position: absolute; right: 2px; bottom: 2px; display: flex; gap: 1px; }
  .grip i { width: 5px; height: 13px; background: #f2f2f2; }
  .grip .last { width: 12px; }
  .scroll { height: 20px; display: flex; align-items: center; justify-content: flex-end; background: #efefef; padding-right: 22px; }
  .scroll span { width: 40%; height: 6px; margin-bottom: 1px; background: #868686; }

  .status { display: grid; grid-template-columns: 1fr auto 1fr; align-items: center; height: 25px; padding: 1px 8px 0 6px; box-sizing: border-box; }
  .mid { padding-left: 62px; }
  .solver { text-align: right; color: #16148a; }

  .taskbar {
    display: grid; grid-template-columns: 1fr auto 1fr; height: 60px;
    background: linear-gradient(90deg, #e2eef8 0%, #e0ecf8 15%, #d5e0f8 27%, #d5dff6 50%, #d9ddef 65%, #dfe9f6 82%, #e1edf8 100%);
  }
  .apps { grid-column: 2; display: flex; align-items: center; padding-left: 2px; }
  .task { position: relative; width: 43px; height: 48px; margin: 0 6px; display: grid; place-items: center; border-radius: 5px; }
  .task.current { background: #ecf1fb; box-shadow: 0 0 0 1px #cfd6e8, 3px 0 0 #e6ebf8; }
  .task.running::after, .task.current::after { content: ""; position: absolute; bottom: 0; left: 18px; width: 8px; height: 4px; border-radius: 2px; background: #7b7e88; }
  .task.current::after { left: 12px; width: 20px; background: #0a76d2; }
  .tray { display: flex; align-items: center; justify-content: flex-end; padding-right: 21px; gap: 10px; }
  .lang, .clock { display: flex; flex-direction: column; }
  .tray .lang { align-items: center; margin: 0 13px 0 9px; }
  .tray .clock { align-items: flex-end; font-size: 15px; margin-left: 8px; }
  .tray .badge { width: 25px; height: 20px; border-radius: 10px; background: #0a78d6; color: #fff; font-size: 14px; margin-left: -2px; }
</style>
